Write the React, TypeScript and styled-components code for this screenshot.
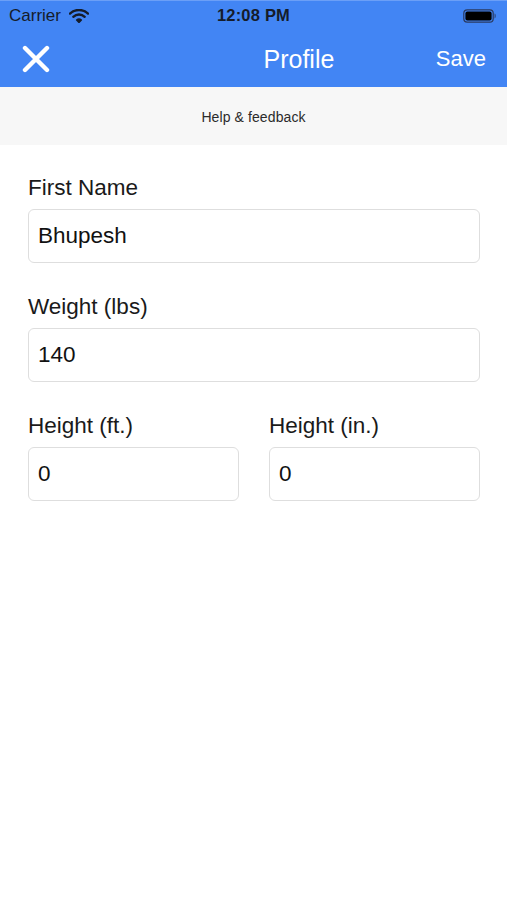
import React from "react";
import styled, { createGlobalStyle } from "styled-components";

const Global = createGlobalStyle`
  html, body { margin: 0; padding: 0; background: #ffffff; }
  body { font-family: "Liberation Sans", Arial, sans-serif; -webkit-font-smoothing: antialiased; }
  * { box-sizing: border-box; }
`;

const Screen = styled.div`
  width: 507px;
  height: 900px;
  background: #ffffff;
  display: flex;
  flex-direction: column;
`;

const Header = styled.header`
  background: #4285f4;
  border-top: 1px solid #6b9ff7;
  display: flex;
  flex-direction: column;
`;

const StatusBar = styled.div`
  height: 29px;
  display: grid;
  grid-template-columns: 1fr auto 1fr;
  align-items: center;
  padding: 0 9px;
  color: #151c2a;
  font-size: 17px;
`;

const StatusLeft = styled.div`
  display: flex;
  align-items: center;
  gap: 8px;
`;

const StatusTime = styled.div`
  font-weight: 700;
  font-size: 16.5px;
  letter-spacing: 0.2px;
`;

const StatusRight = styled.div`
  display: flex;
  justify-content: flex-end;
  align-items: center;
  padding-right: 1px;
`;

const NavBar = styled.nav`
  height: 57px;
  display: flex;
  align-items: center;
  padding: 0 22px;
  color: #ffffff;
`;

const CloseButton = styled.button`
  border: 0;
  background: none;
  padding: 0;
  width: 28px;
  height: 28px;
  display: flex;
  cursor: pointer;
`;

const Title = styled.div`
  flex: 1;
  text-align: center;
  padding-left: 112px;
  font-size: 25px;
  padding-top: 1px;
`;

const SaveButton = styled.button`
  border: 0;
  background: none;
  padding: 1px 0 0;
  color: #ffffff;
  font-family: inherit;
  font-size: 22px;
  margin-right: -1px;
`;

const HelpBand = styled.div`
  height: 58px;
  background: #f7f7f7;
  display: flex;
  align-items: center;
  justify-content: center;
  padding-top: 2px;
  font-size: 14px;
  color: #2b2b2b;
  letter-spacing: 0.1px;
`;

const Form = styled.form`
  padding: 30px 27px 0 28px;
  display: flex;
  flex-direction: column;
  gap: 31px;
`;

const Field = styled.div`
  display: flex;
  flex-direction: column;
  min-width: 0;
`;

const Label = styled.label`
  font-size: 22.5px;
  line-height: 26px;
  color: #1a1a1a;
  margin-bottom: 8px;
`;

const Input = styled.div`
  height: 54px;
  border: 1px solid #dedede;
  border-radius: 6px;
  display: flex;
  align-items: center;
  padding: 0 9px 1px;
  font-size: 22.5px;
  color: #111111;
`;

const Row = styled.div`
  display: grid;
  grid-template-columns: 1fr 1fr;
  gap: 30px;
`;

const Wifi = () => (
  <svg width="20" height="14" viewBox="0 0 20 14">
    <path d="M1 4.6 A13 13 0 0 1 19 4.6" fill="none" stroke="#151c2a" strokeWidth="2.4" strokeLinecap="round" />
    <path d="M4.3 7.8 A8.4 8.4 0 0 1 15.7 7.8" fill="none" stroke="#151c2a" strokeWidth="2.4" strokeLinecap="round" />
    <path d="M7.6 11 A3.6 3.6 0 0 1 12.4 11 L10 13.4 Z" fill="#151c2a" stroke="#151c2a" strokeWidth="1.4" strokeLinejoin="round" />
  </svg>
);

const Battery = () => (
  <svg width="34" height="14" viewBox="0 0 34 14">
    <rect x="0.8" y="0.8" width="29.4" height="12.4" rx="3.4" fill="none" stroke="#2a3a60" strokeWidth="1.2" />
    <rect x="2.4" y="2.4" width="26.2" height="9.2" rx="2" fill="#000000" />
    <path d="M31.6 4.6 C33 4.8 33 9.2 31.6 9.4 Z" fill="#2a3a60" />
  </svg>
);

const CloseIcon = () => (
  <svg width="28" height="28" viewBox="0 0 28 28">
    <path d="M3 3 L25 25 M25 3 L3 25" stroke="#ffffff" strokeWidth="4.4" strokeLinecap="round" />
  </svg>
);

export default function App() {
  return (
    <Screen>
      <Global />
      <Header>
        <StatusBar>
          <StatusLeft>
            <span>Carrier</span>
            <Wifi />
          </StatusLeft>
          <StatusTime>12:08 PM</StatusTime>
          <StatusRight>
            <Battery />
          </StatusRight>
        </StatusBar>
        <NavBar>
          <CloseButton aria-label="Close">
            <CloseIcon />
          </CloseButton>
          <Title>Profile</Title>
          <SaveButton>Save</SaveButton>
        </NavBar>
      </Header>
      <HelpBand>Help &amp; feedback</HelpBand>
      <Form>
        <Field>
          <Label>First Name</Label>
          <Input>Bhupesh</Input>
        </Field>
        <Field>
          <Label>Weight (lbs)</Label>
          <Input>140</Input>
        </Field>
        <Row>
          <Field>
            <Label>Height (ft.)</Label>
            <Input>0</Input>
          </Field>
          <Field>
            <Label>Height (in.)</Label>
            <Input>0</Input>
          </Field>
        </Row>
      </Form>
    </Screen>
  );
}
